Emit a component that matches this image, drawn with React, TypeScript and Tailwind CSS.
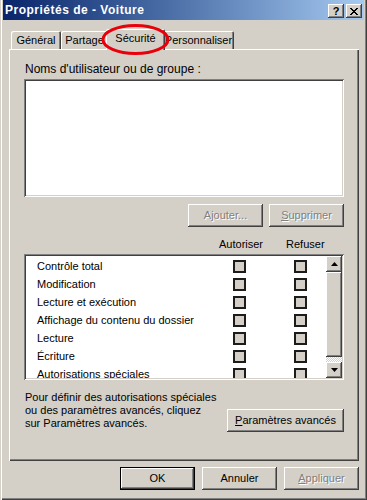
import React from "react";

const raised =
  "shadow-[inset_-1px_-1px_#404040,inset_1px_1px_#ffffff,inset_-2px_-2px_#808080,inset_2px_2px_#d4d0c8]";
const sunken =
  "shadow-[inset_1px_1px_#808080,inset_-1px_-1px_#ffffff,inset_2px_2px_#404040,inset_-2px_-2px_#d4d0c8]";
const disabled = "text-[#808080] [text-shadow:1px_1px_0_#ffffff]";

const perms = [
  "Contrôle total",
  "Modification",
  "Lecture et exécution",
  "Affichage du contenu du dossier",
  "Lecture",
  "Écriture",
  "Autorisations spéciales",
];

const Checkbox: React.FC = () => (
  <div className="w-[13px] h-[13px] shrink-0 border-2 border-[#1c1c1c] bg-[#d4d0c8]" />
);

const Arrow: React.FC<{ up?: boolean }> = ({ up }) => (
  <svg width="7" height="4" viewBox="0 0 7 4">
    {up ? <path d="M3.5 0 L7 4 L0 4 Z" fill="#000" /> : <path d="M0 0 L7 0 L3.5 4 Z" fill="#000" />}
  </svg>
);

const App: React.FC = () => {
  return (
    <div
      className="relative w-[367px] h-[500px] bg-[#d4d0c8] pl-[3px] pr-[3px] flex flex-col text-[11px] leading-[13px] text-black shadow-[inset_1px_0_#d4d0c8,inset_2px_0_#ffffff,inset_-1px_-1px_#404040,inset_-2px_-2px_#808080]"
      style={{ fontFamily: '"Liberation Sans", Arial, sans-serif' }}
    >
      {/* title bar */}
      <div className="h-[20px] flex items-center justify-between bg-gradient-to-r from-[#0a246a] to-[#a6caf0] pl-[2px] pr-[2px]">
        <span className="text-white font-bold text-[12px] tracking-[0.5px]">Propriétés de - Voiture</span>
        <div className="flex gap-[2px] mt-[2px]">
          <div className={`w-[16px] h-[14px] bg-[#d4d0c8] flex items-center justify-center font-bold text-[11px] ${raised}`}>?</div>
          <div className={`w-[16px] h-[14px] bg-[#d4d0c8] flex items-center justify-center ${raised}`}>
            <svg width="8" height="7" viewBox="0 0 8 7" shapeRendering="crispEdges">
              <path d="M0 0h2v1H0zM6 0h2v1H6zM1 1h2v1H1zM5 1h2v1H5zM2 2h4v1H2zM3 3h2v1H3zM2 4h4v1H2zM1 5h2v1H1zM5 5h2v1H5zM0 6h2v1H0zM6 6h2v1H6z" fill="#000" />
            </svg>
          </div>
        </div>
      </div>

      {/* tabs */}
      <div className="flex items-end h-[21px] mt-[9px] ml-[8px] relative z-10">
        <div className="w-[50px] h-[18px] flex items-center justify-center rounded-t-[2px] shadow-[inset_1px_1px_#ffffff,inset_-1px_0_#404040,inset_-2px_0_#808080] mb-[1px]">Général</div>
        <div className="w-[47px] h-[18px] flex items-center justify-center rounded-t-[2px] shadow-[inset_1px_1px_#ffffff,inset_-1px_0_#404040,inset_-2px_0_#808080] mb-[1px]">Partage</div>
        <div className="relative z-10 w-[59px] h-[21px] -mx-[2px] flex items-center justify-center rounded-t-[2px] bg-[#d4d0c8] shadow-[inset_1px_1px_#ffffff,inset_-1px_0_#404040,inset_-2px_0_#808080] pb-[3px]">Sécurité</div>
        <div className="w-[71px] h-[18px] flex items-center justify-center rounded-t-[2px] shadow-[inset_1px_1px_#ffffff,inset_-1px_0_#404040,inset_-2px_0_#808080] mb-[1px]">Personnaliser</div>
      </div>

      {/* tab page */}
      <div className="-mt-[1px] ml-[6px] w-[350px] h-[412px] flex flex-col pl-[15px] pr-[15px] pt-[14px] shadow-[inset_1px_1px_#ffffff,inset_-1px_-1px_#404040,inset_-2px_-2px_#808080]">
        <div className="pl-[1px] text-[12px]">Noms d'utilisateur ou de groupe :</div>
        <div className={`mt-[3px] h-[118px] bg-white ${sunken}`} />
        <div className="mt-[7px] flex justify-end gap-[6px]">
          <div className={`w-[75px] h-[23px] flex items-center justify-center ${raised} ${disabled}`}>
            <span>
              A<span className="underline">j</span>outer...
            </span>
          </div>
          <div className={`w-[75px] h-[23px] flex items-center justify-center ${raised} ${disabled}`}>
            <span>
              <span className="underline">S</span>upprimer
            </span>
          </div>
        </div>

        <div className="mt-[11px] flex h-[13px]">
          <span className="ml-[195px]">Autoriser</span>
          <span className="ml-[23px]">Refuser</span>
        </div>

        <div className={`mt-[3px] h-[126px] bg-white p-[2px] flex ${sunken}`}>
          <div className="flex-1 overflow-hidden pt-[1px]">
            {perms.map((p) => (
              <div key={p} className="h-[18px] flex items-center">
                <span className="ml-[11px] w-[196px] whitespace-nowrap">{p}</span>
                <Checkbox />
                <div className="w-[48px]" />
                <Checkbox />
              </div>
            ))}
          </div>
          <div className="w-[16px] flex flex-col">
            <div className={`h-[16px] bg-[#d4d0c8] flex items-center justify-center ${raised}`}>
              <Arrow up />
            </div>
            <div className={`h-[85px] bg-[#d4d0c8] ${raised}`} />
            <div className="h-[5px] bg-[repeating-conic-gradient(#ffffff_0_25%,#d4d0c8_0_50%)] bg-[length:2px_2px]" />
            <div className={`h-[16px] bg-[#d4d0c8] flex items-center justify-center ${raised}`}>
              <Arrow />
            </div>
          </div>
        </div>

        <div className="mt-[11px] flex justify-between">
          <div className="pl-[1px] whitespace-nowrap">
            Pour définir des autorisations spéciales
            <br />
            ou des paramètres avancés, cliquez
            <br />
            sur Paramètres avancés.
          </div>
          <div className={`mt-[18px] shrink-0 w-[117px] h-[23px] flex items-center justify-center ${raised}`}>
            <span>
              <span className="underline">P</span>aramètres avancés
            </span>
          </div>
        </div>
      </div>

      {/* dialog buttons */}
      <div className="mt-[6px] ml-[6px] w-[350px] flex justify-end gap-[7px]">
        <div className="w-[75px] h-[23px] border border-black">
          <div className={`w-full h-full flex items-center justify-center ${raised}`}>OK</div>
        </div>
        <div className={`w-[75px] h-[23px] flex items-center justify-center ${raised}`}>Annuler</div>
        <div className={`w-[75px] h-[23px] flex items-center justify-center ${raised} ${disabled}`}>
          <span>
            <span className="underline">A</span>ppliquer
          </span>
        </div>
      </div>

      {/* red annotation */}
      <svg className="absolute left-0 top-0 pointer-events-none z-20" width="367" height="70">
        <ellipse cx="135.5" cy="39.5" rx="32.5" ry="14" fill="none" stroke="#e8000b" strokeWidth="3" />
      </svg>
    </div>
  );
};

export default App;
